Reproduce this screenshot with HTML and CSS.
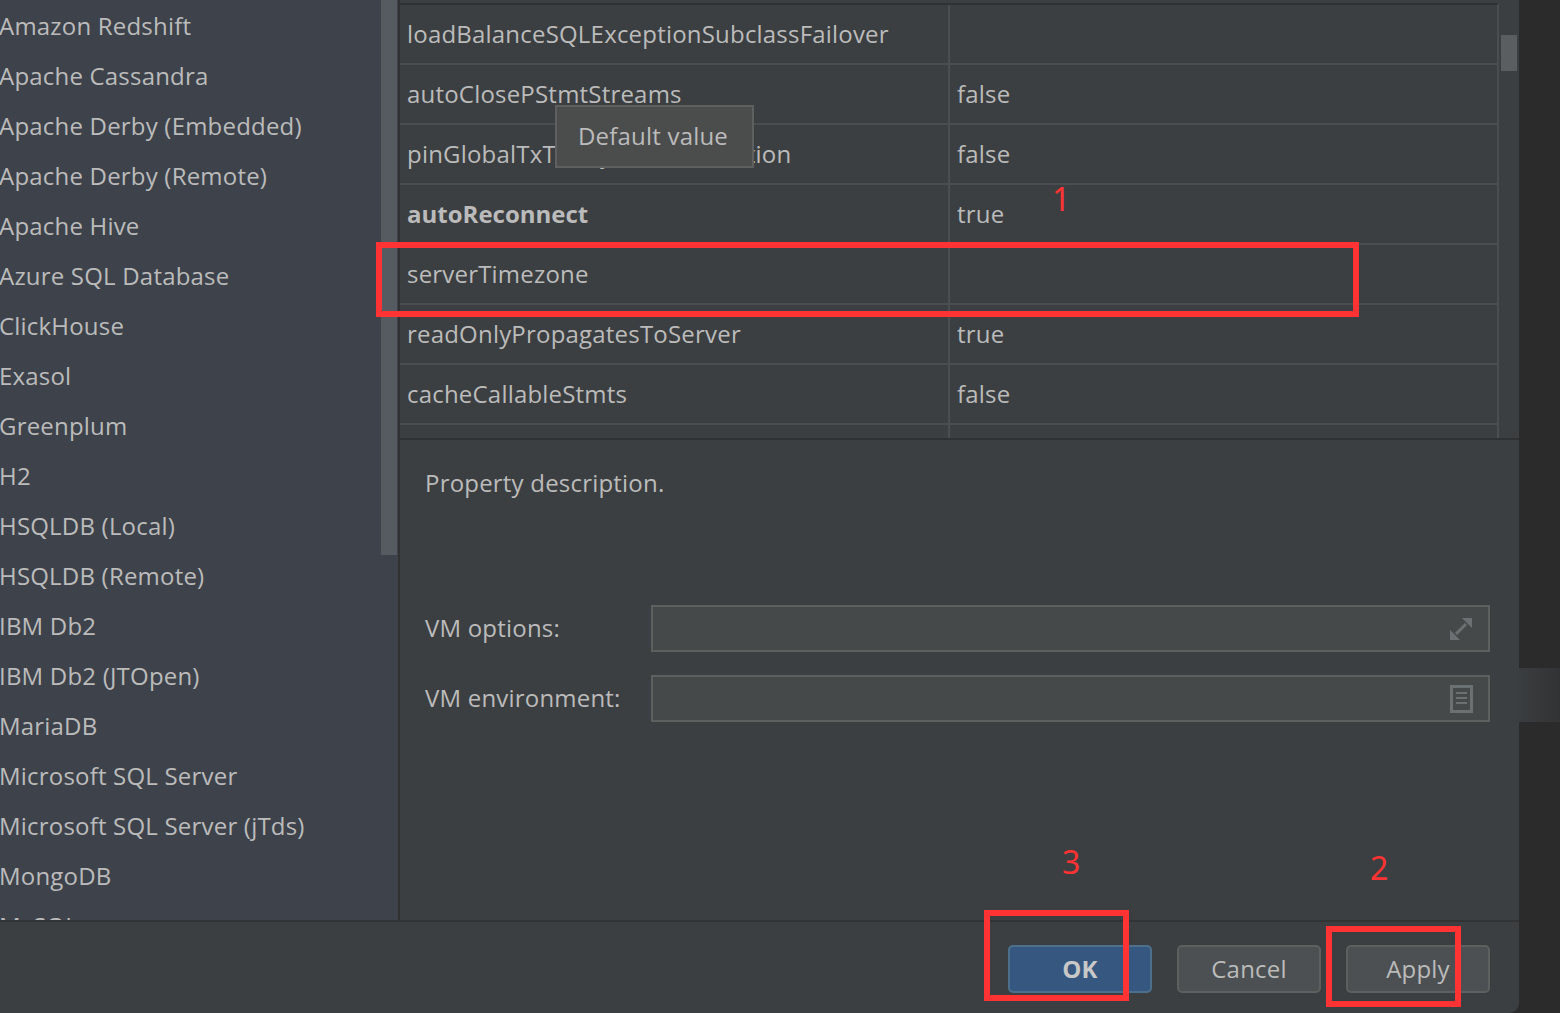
FILE: index.html
```html
<!DOCTYPE html>
<html>
<head>
<meta charset="utf-8">
<link rel="stylesheet" href="styles.css">
</head>
<body>
<div class="screen">
  <div class="dialog">
    <div class="content">
      <aside class="sidebar">
        <ul class="list">
          <li>Amazon Redshift</li>
          <li>Apache Cassandra</li>
          <li>Apache Derby (Embedded)</li>
          <li>Apache Derby (Remote)</li>
          <li>Apache Hive</li>
          <li>Azure SQL Database</li>
          <li>ClickHouse</li>
          <li>Exasol</li>
          <li>Greenplum</li>
          <li>H2</li>
          <li>HSQLDB (Local)</li>
          <li>HSQLDB (Remote)</li>
          <li>IBM Db2</li>
          <li>IBM Db2 (JTOpen)</li>
          <li>MariaDB</li>
          <li>Microsoft SQL Server</li>
          <li>Microsoft SQL Server (jTds)</li>
          <li>MongoDB</li>
          <li>MySQL</li>
        </ul>
        <div class="vscroll"><div class="vthumb"></div></div>
      </aside>
      <main class="main">
        <div class="table-area">
          <div class="table">
            <div class="row"><div class="cell name">loadBalanceSQLExceptionSubclassFailover</div><div class="cell value"></div></div>
            <div class="row"><div class="cell name">autoClosePStmtStreams</div><div class="cell value">false</div></div>
            <div class="row"><div class="cell name">pinGlobalTxToPhysicalConnection</div><div class="cell value">false</div></div>
            <div class="row"><div class="cell name bold">autoReconnect</div><div class="cell value">true</div></div>
            <div class="row"><div class="cell name">serverTimezone</div><div class="cell value"></div></div>
            <div class="row"><div class="cell name">readOnlyPropagatesToServer</div><div class="cell value">true</div></div>
            <div class="row"><div class="cell name">cacheCallableStmts</div><div class="cell value">false</div></div>
            <div class="row"><div class="cell name">&nbsp;</div><div class="cell value"></div></div>
          </div>
          <div class="tscroll"><div class="tthumb"></div></div>
          <div class="tooltip">Default value</div>
        </div>
        <div class="lower">
          <p class="desc">Property description.</p>
          <div class="form">
            <div class="field">
              <label class="label">VM options:</label>
              <div class="input">
                <svg class="icon" width="26" height="26" viewBox="0 0 26 26">
                  <path d="M14 2 H24 V12 Z" fill="#6b7073"/>
                  <path d="M12 24 H2 V14 Z" fill="#6b7073"/>
                  <path d="M18 8 L8 18" stroke="#6b7073" stroke-width="3"/>
                </svg>
              </div>
            </div>
            <div class="field">
              <label class="label">VM environment:</label>
              <div class="input">
                <svg class="icon doc" width="23" height="28" viewBox="0 0 23 28">
                  <rect x="1.5" y="1.5" width="20" height="25" fill="none" stroke="#6b7073" stroke-width="3"/>
                  <rect x="6" y="7" width="11" height="2" fill="#6b7073"/>
                  <rect x="6" y="12" width="11" height="2" fill="#6b7073"/>
                  <rect x="6" y="17" width="11" height="2" fill="#6b7073"/>
                </svg>
              </div>
            </div>
          </div>
        </div>
      </main>
    </div>
    <footer class="footer">
      <button class="btn primary">OK</button>
      <button class="btn">Cancel</button>
      <button class="btn">Apply</button>
    </footer>

    <div class="mark box1"></div>
    <div class="mark box3"></div>
    <div class="mark box2"></div>
    <span class="num n1">1</span>
    <span class="num n3">3</span>
    <span class="num n2">2</span>
  </div>
  <div class="outside"><div class="strip"></div></div>
</div>
</body>
</html>
```
FILE: styles.css
```css
* { box-sizing: border-box; }
html, body { margin: 0; padding: 0; }
body {
  width: 1560px;
  height: 1013px;
  overflow: hidden;
  background: #2b2b2b;
  font-family: "Open Sans", "Noto Sans", sans-serif;
  font-size: 24px;
  letter-spacing: 0.2px;
  color: #bbbbbb;
}
.screen { display: flex; width: 1560px; height: 1013px; }
.dialog {
  position: relative;
  width: 1519px;
  height: 1013px;
  background: #3c3f41;
  border-bottom-right-radius: 10px;
  display: flex;
  flex-direction: column;
  overflow: hidden;
}
.outside { flex: 1; padding-top: 668px; }
.strip { height: 54px; background: linear-gradient(90deg, #3a3d3f, #353739 60%, #313335); }

.content { display: flex; height: 922px; border-bottom: 2px solid #313335; }
.sidebar {
  width: 400px;
  display: flex;
  background: #3e434b;
  border-right: 2px solid #2f3133;
  overflow: hidden;
}
.list { list-style: none; margin: 0; padding: 1px 0 0 0; flex: 1; overflow: hidden; }
.list li { height: 50px; line-height: 50px; white-space: nowrap; margin-left: -1px; }
.vscroll { width: 17px; padding-right: 1px; }
.vthumb { height: 555px; background: #565a61; }

.main { flex: 1; display: flex; flex-direction: column; }
.table-area {
  position: relative;
  height: 440px;
  display: flex;
  border-bottom: 2px solid #2f3133;
  padding-top: 3px;
  overflow: hidden;
}
.table { width: 1099px; border-top: 2px solid #2f3133; border-right: 2px solid #4b4e50; overflow: hidden; }
.row { display: flex; height: 60px; border-bottom: 2px solid #4b4e50; }
.cell { line-height: 58px; padding-left: 7px; white-space: nowrap; }
.name { width: 550px; border-right: 2px solid #4b4e50; }
.value { flex: 1; }
.bold { font-weight: 700; letter-spacing: 0; }
.tscroll { flex: 1; padding: 35px 2px 0 2px; margin-top: -3px; }
.tthumb { height: 36px; background: #5a5e60; }
.tooltip {
  position: absolute;
  left: 155px;
  top: 105px;
  width: 199px;
  height: 63px;
  background: #4b4d4d;
  border: 2px solid #5e6060;
  padding-left: 21px;
  line-height: 57px;
  color: #bbbbbb;
}

.lower { flex: 1; padding: 27px 29px 0 25px; }
.desc { margin: 0; line-height: 32px; height: 138px; }
.form { display: flex; flex-direction: column; gap: 23px; }
.field { display: flex; align-items: center; }
.label { width: 226px; line-height: 44px; margin-top: -2px; }
.input {
  flex: 1;
  height: 47px;
  background: #45494a;
  border: 2px solid #5e6060;
  display: flex;
  align-items: center;
  justify-content: flex-end;
  padding-right: 14px;
}
.icon.doc { margin-right: 1px; }

.footer {
  flex: 1;
  display: flex;
  justify-content: flex-end;
  align-items: flex-start;
  gap: 25px;
  padding: 23px 29px 0 0;
}
.btn {
  width: 144px;
  height: 48px;
  border-radius: 5px;
  background: #4c5052;
  border: 2px solid #5e6060;
  color: #bbbbbb;
  font-family: "Open Sans", "Noto Sans", sans-serif;
  font-size: 24px;
  letter-spacing: 0.2px;
  line-height: 42px;
  padding: 0;
}
.btn.primary { background: #365880; border-color: #4c708c; font-weight: 700; color: #c8c8c8; }

.mark { position: absolute; border: 6px solid #ff3333; }
.box1 { left: 376px; top: 242px; width: 983px; height: 75px; }
.box3 { left: 984px; top: 910px; width: 145px; height: 91px; }
.box2 { left: 1326px; top: 926px; width: 135px; height: 81px; }
.num { position: absolute; color: #ff3333; font-family: "Noto Sans", sans-serif; font-size: 32px; line-height: 40px; letter-spacing: 0; }
.n1 { left: 1052px; top: 179px; }
.n3 { left: 1062px; top: 842px; }
.n2 { left: 1370px; top: 848px; }
```
